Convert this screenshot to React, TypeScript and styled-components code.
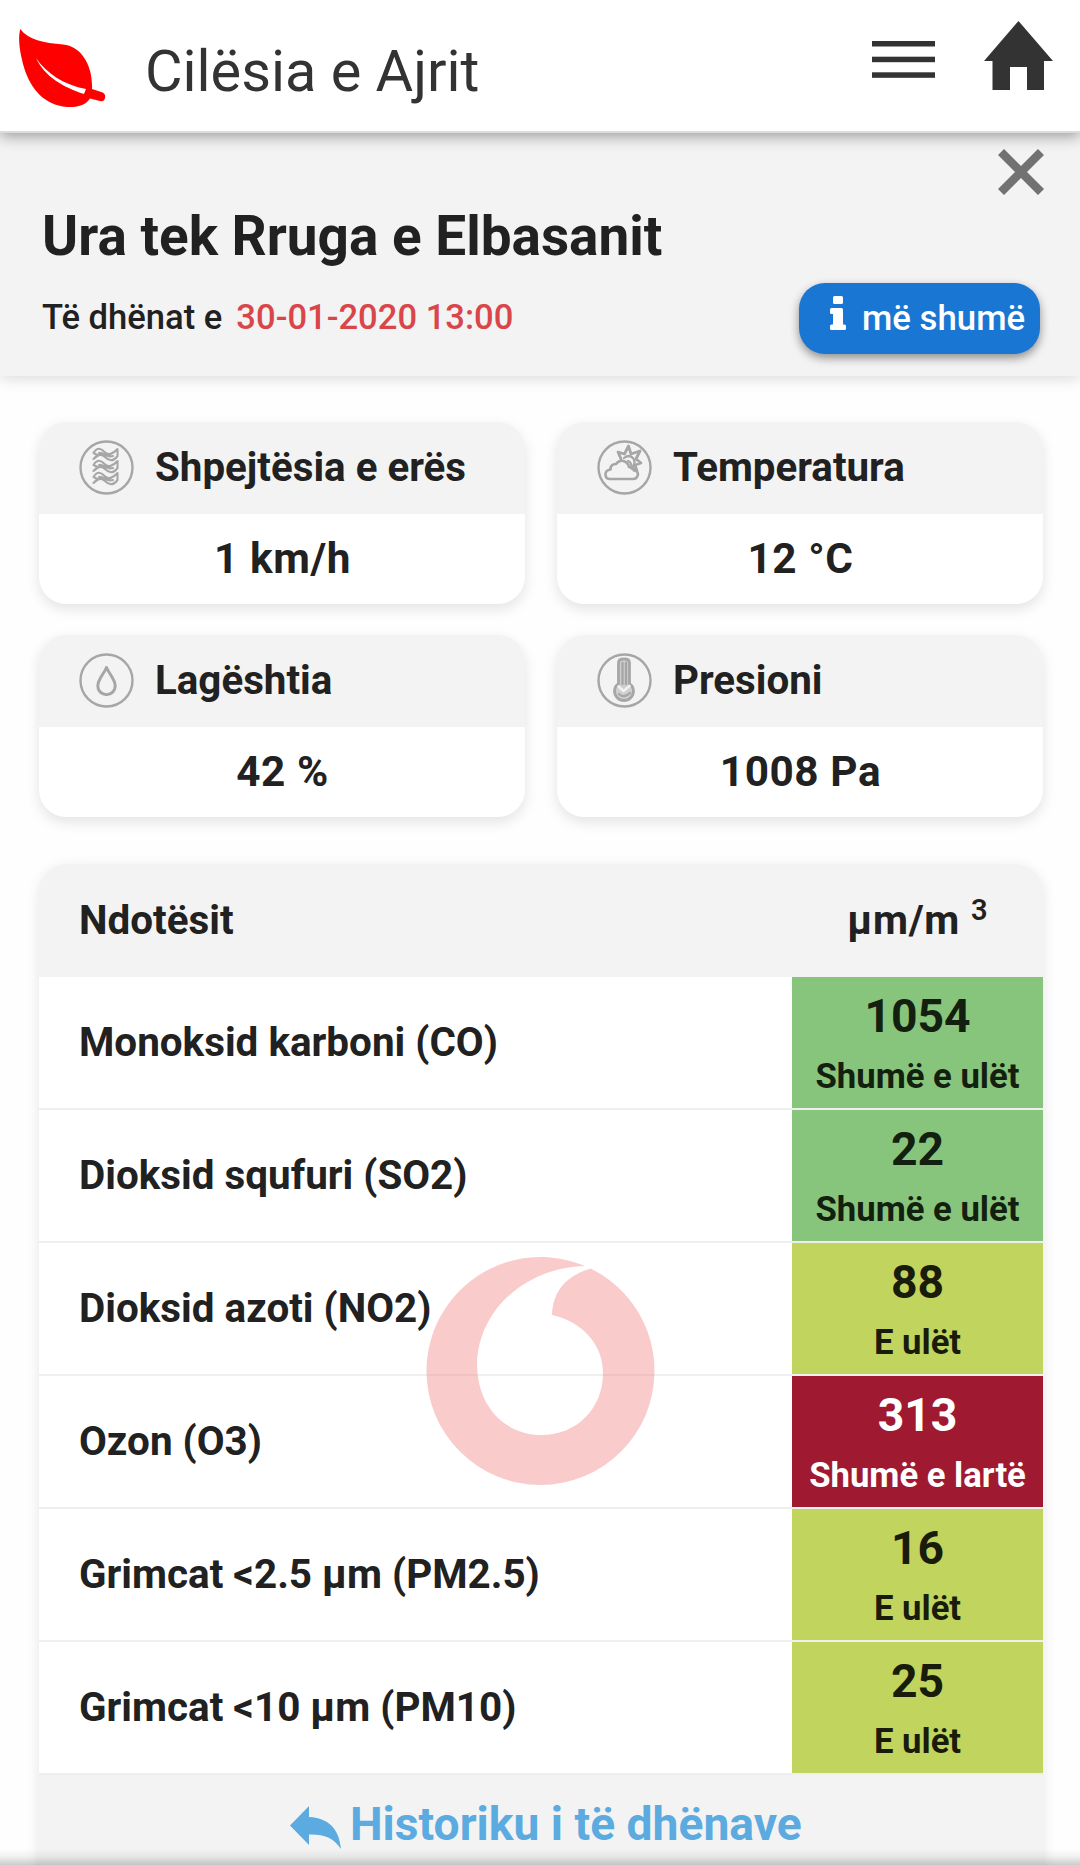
import React from 'react';
import styled, { createGlobalStyle } from 'styled-components';

const GlobalStyle = createGlobalStyle`
  *, *::before, *::after { box-sizing: border-box; }
  body {
    margin: 0;
    background: #fefefe;
    color: #212121;
    font-family: Roboto, "Liberation Sans", sans-serif;
  }
`;

const Screen = styled.div`
  position: relative;
  display: flex;
  flex-direction: column;
  width: 1080px;
  height: 1865px;
  overflow: hidden;
`;

const Header = styled.header`
  position: relative;
  z-index: 1;
  display: flex;
  align-items: flex-start;
  flex: none;
  height: 133px;
  padding: 21px 27px 0 19px;
  background: #fff;
  border-bottom: 2px solid #dcdcdc;
  box-shadow: 0 3px 14px rgba(0, 0, 0, 0.38);
`;

const Leaf = styled.svg`
  width: 88px;
  height: 82px;
  margin-top: 7px;
`;

const AppTitle = styled.h1`
  flex: 1;
  margin: 17px 0 0 38px;
  font-size: 57.7px;
  line-height: 66px;
  font-weight: 400;
  color: #333;
`;

const MenuIcon = styled.svg`
  width: 63px;
  height: 37px;
  margin: 20px 49px 0 0;
`;

const HomeIcon = styled.svg`
  width: 69px;
  height: 70px;
`;

const Station = styled.section`
  flex: none;
  height: 243px;
  padding: 16px 40px 0 42px;
  background: #f3f3f3;
  box-shadow: 0 3px 14px rgba(0, 0, 0, 0.14);
`;

const CloseRow = styled.div`
  display: flex;
  justify-content: flex-end;
  height: 46px;
`;

const CloseIcon = styled.svg`
  width: 46px;
  height: 46px;
  margin-right: -4px;
`;

const StationName = styled.h2`
  margin: 9px 0 15px;
  font-size: 54.9px;
  line-height: 64px;
  font-weight: 700;
`;

const StationMeta = styled.div`
  display: flex;
  justify-content: space-between;
  height: 71px;
`;

const Stamp = styled.div`
  display: flex;
  gap: 14px;
  font-size: 34.6px;
  font-weight: 500;
  line-height: 69px;
`;

const StampDate = styled.span`
  color: #d9464a;
`;

const MoreButton = styled.button`
  display: flex;
  align-items: flex-start;
  width: 241px;
  height: 71px;
  padding: 13px 0 0 31px;
  border: 0;
  border-radius: 26px;
  background: #1976d2;
  color: #fff;
  font: 500 34.8px/44px Roboto, "Liberation Sans", sans-serif;
  white-space: nowrap;
  box-shadow: 0 4px 10px rgba(0, 0, 0, 0.42);
`;

const InfoIcon = styled.svg`
  flex: none;
  width: 16px;
  height: 34px;
  margin-right: 16px;
`;

const Cards = styled.section`
  display: grid;
  grid-template-columns: 486px 486px;
  gap: 31px 32px;
  flex: none;
  margin: 46px 0 0 39px;
`;

const Card = styled.article`
  display: flex;
  flex-direction: column;
  height: 182px;
  border-radius: 27px;
  overflow: hidden;
  background: #fff;
  box-shadow: 0 5px 14px rgba(0, 0, 0, 0.11);
`;

const CardHead = styled.div`
  display: flex;
  align-items: center;
  gap: 21px;
  height: 92px;
  padding: 0 0 2px 40px;
  background: #f3f3f3;
  font-size: 40.3px;
  font-weight: 700;
`;

const CardIcon = styled.svg`
  flex: none;
  width: 55px;
  height: 55px;
  fill: none;
  stroke: #a6a6a6;
  stroke-width: 2.4;
  stroke-linecap: round;
  stroke-linejoin: round;
`;

const CardValue = styled.div`
  height: 90px;
  line-height: 90px;
  padding-left: 1px;
  text-align: center;
  font-size: 42.3px;
  font-weight: 700;
  letter-spacing: 0.6px;
`;

const Table = styled.section`
  flex: none;
  width: 1004px;
  margin: 47px 0 0 39px;
  border-radius: 29px 29px 0 0;
  background: #f3f3f3;
  box-shadow: 0 3px 14px rgba(0, 0, 0, 0.1);
`;

const TableHead = styled.div`
  display: flex;
  justify-content: space-between;
  height: 113px;
  padding-left: 40px;
  font-size: 40.4px;
  font-weight: 700;
  line-height: 113px;
`;

const Unit = styled.div`
  display: flex;
  justify-content: center;
  gap: 11px;
  width: 251px;
  letter-spacing: 0.7px;
`;

const Exponent = styled.span`
  font-size: 29px;
  line-height: 92px;
  font-weight: 600;
  letter-spacing: 0;
`;

const TableRow = styled.div`
  display: flex;
  height: 133px;
  border-bottom: 2px solid #efefef;
  background: #fff;
`;

const Pollutant = styled.div`
  flex: 1;
  padding-left: 40px;
  font-size: 40.4px;
  font-weight: 700;
  line-height: 131px;
`;

const Reading = styled.div<{ $bg: string; $fg: string }>`
  display: flex;
  flex-direction: column;
  align-items: center;
  width: 251px;
  padding-top: 9px;
  background: ${(p) => p.$bg};
  color: ${(p) => p.$fg};
`;

const Amount = styled.span`
  font-size: 46.3px;
  font-weight: 700;
  line-height: 60px;
`;

const Level = styled.span`
  font-size: 34.7px;
  font-weight: 700;
  line-height: 60px;
`;

const HistoryLink = styled.a`
  display: flex;
  align-items: flex-start;
  height: 120px;
  padding: 19px 0 0 251px;
  color: #5baae0;
  font-size: 46.2px;
  font-weight: 700;
  line-height: 60px;
`;

const ReplyIcon = styled.svg`
  width: 51px;
  height: 43px;
  margin: 12px 9px 0 0;
`;

const Spinner = styled.svg`
  position: absolute;
  z-index: 2;
  left: 426px;
  top: 1257px;
  width: 229px;
  height: 229px;
  pointer-events: none;
`;

const BottomShade = styled.div`
  position: absolute;
  left: 0;
  right: 0;
  bottom: 0;
  height: 16px;
  background: linear-gradient(rgba(0, 0, 0, 0), rgba(0, 0, 0, 0.06) 50%, rgba(0, 0, 0, 0.2));
`;

const WindIcon = () => (
  <CardIcon viewBox="0 0 55 55">
    <circle cx="27.5" cy="27.5" r="26" />
    {[9, 21, 33].map((y) => (
      <path
        key={y}
        strokeWidth="2.1"
        d={`M14.500 ${y + 4}C18 ${y - 2} 22 ${y - 1} 25.500 ${y + 3}S34 ${y + 5} 38.500 ${y}V${y + 7}C34 ${y + 13} 30 ${y + 12} 26 ${y + 8}S19 ${y + 6} 14.500 ${y + 10}L18.500 ${y + 6}ZM20 ${y + 4}C25 ${y + 3} 26 ${y + 9} 34 ${y + 7}`}
      />
    ))}
  </CardIcon>
);

const WeatherIcon = () => (
  <CardIcon viewBox="0 0 55 55">
    <circle cx="27.5" cy="27.5" r="26" />
    <path strokeWidth="2.6" d="M13 39q-4.500 0-4.500-4.500q0-4.500 5-5q0-5.500 5.500-5.500q3-4 7.500-3q4.500 1.500 5.500 6q5 0 5 3.500q4 .500 4 4q-1 4.500-5 4.500z" />
    <path strokeWidth="2.8" d="M24 19l-3-7 6.500 2 4-8 2.500 8 9-3-4 8 5 4-6 2 2 6-6-3" />
    <path strokeWidth="2.2" d="M27 18q5-4 9 0q3 4 0 8M31 21q3 1 3 4" />
  </CardIcon>
);

const DropIcon = () => (
  <CardIcon viewBox="0 0 55 55">
    <circle cx="27.500" cy="27.500" r="26" />
    <path strokeWidth="3" d="M27.500 14.500C25 21 18.800 26 18.800 33a8.700 8.700 0 0 0 17.400 0C36.200 26 30 21 27.500 14.500z" />
  </CardIcon>
);

const ThermometerIcon = () => (
  <CardIcon viewBox="0 0 55 55">
    <circle cx="27.500" cy="27.500" r="26" />
    <path strokeWidth="2.800" fill="#d0d0d0" d="M21.500 31V10q0-4 5.500-4t5.500 4V31q4 2.500 4 7a9.500 9.500 0 0 1-19 0q0-4.500 4-7z" />
    <path strokeWidth="2.400" d="M25.500 10V31M29 10V31M22 41q5 5 11-1" />
    <path stroke="#f2f2f2" strokeWidth="2.600" d="M21.500 33.500l5 4.500 6-5" />
  </CardIcon>
);

const metrics = [
  { label: 'Shpejtësia e erës', value: '1 km/h', Icon: WindIcon },
  { label: 'Temperatura', value: '12 °C', Icon: WeatherIcon },
  { label: 'Lagështia', value: '42 %', Icon: DropIcon },
  { label: 'Presioni', value: '1008 Pa', Icon: ThermometerIcon },
];

const levels = {
  veryLow: { text: 'Shumë e ulët', bg: '#88c57c', fg: '#14200f' },
  low: { text: 'E ulët', bg: '#c1d45e', fg: '#191c0a' },
  veryHigh: { text: 'Shumë e lartë', bg: '#9f1a30', fg: '#fff' },
};

const pollutants: { name: string; amount: number; level: keyof typeof levels }[] = [
  { name: 'Monoksid karboni (CO)', amount: 1054, level: 'veryLow' },
  { name: 'Dioksid squfuri (SO2)', amount: 22, level: 'veryLow' },
  { name: 'Dioksid azoti (NO2)', amount: 88, level: 'low' },
  { name: 'Ozon (O3)', amount: 313, level: 'veryHigh' },
  { name: 'Grimcat <2.5 µm (PM2.5)', amount: 16, level: 'low' },
  { name: 'Grimcat <10 µm (PM10)', amount: 25, level: 'low' },
];

export default function App() {
  return (
    <Screen>
      <GlobalStyle />
      <Header>
        <Leaf viewBox="19 28 88 82">
          <path
            fill="#fe0000"
            d="M20.300 29C28 40 44 43 63 44.500C81 46 93 65 92 89L102 92.300Q106 94 105 98Q104 102 100 101L90 98.500C85 106 76 107.500 67 107C44 105 31 89 24.500 69C20 54 17.500 39 20.300 29Z"
          />
          <path fill="#fff" d="M36 58C46 73 64 85 86 89L84 94C63 87 45 77 36 58Z" />
        </Leaf>
        <AppTitle>Cilësia e Ajrit</AppTitle>
        <MenuIcon viewBox="0 0 63 37" fill="#333">
          <rect width="63" height="5.500" />
          <rect y="15.700" width="63" height="5.500" />
          <rect y="31.300" width="63" height="5.500" />
        </MenuIcon>
        <HomeIcon viewBox="0 0 69 70" fill="#333">
          <path d="M34.500 0L69 40H60V69H43V46H26V69H8.500V40H0Z" />
        </HomeIcon>
      </Header>

      <Station>
        <CloseRow>
          <CloseIcon viewBox="0 0 46 46" stroke="#727272" strokeWidth="8.500">
            <path d="M3 3L43 43M43 3L3 43" />
          </CloseIcon>
        </CloseRow>
        <StationName>Ura tek Rruga e Elbasanit</StationName>
        <StationMeta>
          <Stamp>
            Të dhënat e <StampDate>30-01-2020 13:00</StampDate>
          </Stamp>
          <MoreButton>
            <InfoIcon viewBox="0 0 16 34" fill="#fff">
              <rect x="3" width="10" height="8" rx="1.500" />
              <path d="M1.500 12H11.500Q13 12 13 13.500V28.500H14.500Q16 28.500 16 30V32.500Q16 34 14.500 34H1.500Q0 34 0 32.500V30Q0 28.500 1.500 28.500H3V18H1.500Q0 18 0 16.500V13.500Q0 12 1.500 12Z" />
            </InfoIcon>
            më shumë
          </MoreButton>
        </StationMeta>
      </Station>

      <Cards>
        {metrics.map(({ label, value, Icon }) => (
          <Card key={label}>
            <CardHead>
              <Icon />
              {label}
            </CardHead>
            <CardValue>{value}</CardValue>
          </Card>
        ))}
      </Cards>

      <Table>
        <TableHead>
          <span>Ndotësit</span>
          <Unit>
            µm/m <Exponent>3</Exponent>
          </Unit>
        </TableHead>
        {pollutants.map(({ name, amount, level }) => (
          <TableRow key={name}>
            <Pollutant>{name}</Pollutant>
            <Reading $bg={levels[level].bg} $fg={levels[level].fg}>
              <Amount>{amount}</Amount>
              <Level>{levels[level].text}</Level>
            </Reading>
          </TableRow>
        ))}
        <HistoryLink>
          <ReplyIcon viewBox="0 0 51 43" fill="#5baae0">
            <path d="M0 19.500L19 0V11C38 12 49 22 51 43C43 31 33 28 19 28.500V39Z" />
          </ReplyIcon>
          Historiku i të dhënave
        </HistoryLink>
      </Table>

      <Spinner viewBox="426 1257 229 229">
        <path
          fill="#f18c8c"
          fillOpacity="0.45"
          d="M585 1266.100A114 114 0 0 0 426.500 1371A114 114 0 0 0 654.500 1371A114 114 0 0 0 590.500 1268.500C566 1276 553 1291 552 1315C583 1322 603 1345 603 1373C603 1409 576 1435 542 1435C505 1435 477 1407 477 1363C479 1308 528 1267 585 1266.100Z"
        />
      </Spinner>
      <BottomShade />
    </Screen>
  );
}
